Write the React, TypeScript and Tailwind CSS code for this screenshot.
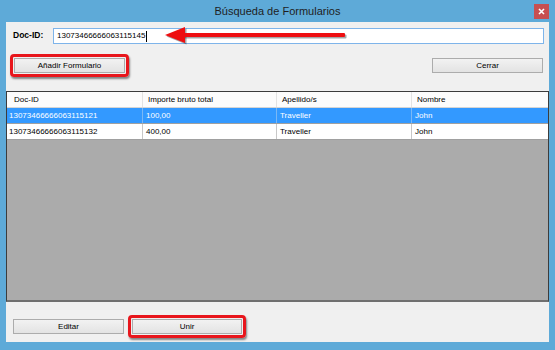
const rows = [
  { id: "13073466666063115121", amount: "100,00", last: "Traveller", name: "John", selected: true },
  { id: "13073466666063115132", amount: "400,00", last: "Traveller", name: "John", selected: false },
];

function WinButton({ label, className = "" }: { label: string; className?: string }) {
  return (
    <div
      className={`h-[15px] border border-[#acacac] bg-gradient-to-b from-[#f2f2f2] to-[#e3e3e3] flex items-center justify-center text-[8px] text-black ${className}`}
    >
      {label}
    </div>
  );
}

function Highlight() {
  return (
    <div className="absolute -inset-x-[4px] -inset-y-[4px] rounded-[4px] border-[3px] border-[#e8161c] shadow-[1px_2px_2px_rgba(0,0,0,0.45)] pointer-events-none" />
  );
}

export default function App() {
  return (
    <div
      className="w-[555px] h-[350px] bg-[#5eaad8] flex flex-col"
      style={{ fontFamily: '"Liberation Sans", Arial, sans-serif' }}
    >
      <div className="relative h-[22px] flex items-center justify-center text-[11px] text-[#1e1e1e]">
        Búsqueda de Formularios
        <div className="absolute right-[6px] top-[4px] w-[15px] h-[15px] bg-[#c74f50] flex items-center justify-center">
          <svg width="7" height="7" viewBox="0 0 7 7">
            <path d="M1 1 L6 6 M6 1 L1 6" stroke="#fff" strokeWidth="1.6" />
          </svg>
        </div>
      </div>

      <div className="mx-[6px] mb-[8px] flex-1 bg-[#f0f0f0] flex flex-col">
        <div className="relative flex items-start pt-[6px] pl-[7px] pr-[5px]">
          <span className="w-[40px] pt-[1px] text-[8.5px] font-bold text-black">Doc-ID:</span>
          <div className="flex-1 h-[16px] border border-[#7eb4ea] bg-white flex items-center pl-[3px] text-[8px] text-black">
            13073466666063115145
            <span className="w-px h-[11px] bg-black ml-px" />
          </div>
          <svg
            className="absolute left-[157px] top-[4px]"
            width="186"
            height="22"
            viewBox="0 0 186 22"
          >
            <g transform="translate(1.5,1.5)" fill="rgba(0,0,0,0.35)">
              <polygon points="2,9 22,1 22,17" />
              <rect x="20" y="7" width="162" height="4" rx="1" />
            </g>
            <g fill="#ee0e10">
              <polygon points="2,9 22,1 22,17" />
              <rect x="20" y="7" width="162" height="4" rx="1" />
            </g>
          </svg>
        </div>

        <div className="flex justify-between pt-[14px] pl-[8px] pr-[6px]">
          <div className="relative">
            <WinButton label="Añadir Formulario" className="w-[111px]" />
            <Highlight />
          </div>
          <WinButton label="Cerrar" className="w-[111px]" />
        </div>

        <div className="mt-[18px] h-[211px] border border-[#3c3c3c] border-b-[2px] border-b-[#6f6f6f] bg-[#ababab] flex flex-col text-[8px]">
          <div className="h-[16px] bg-[#fcfcfc] border-b border-[#d5d5d5] grid grid-cols-[136px_134px_135px_1fr]">
            <div className="pl-[7px] flex items-center border-r border-[#e3e3e3]">Doc-ID</div>
            <div className="pl-[5px] flex items-center border-r border-[#e3e3e3]">Importe bruto total</div>
            <div className="pl-[5px] flex items-center border-r border-[#e3e3e3]">Apellido/s</div>
            <div className="pl-[5px] flex items-center">Nombre</div>
          </div>
          {rows.map((r) => (
            <div
              key={r.id}
              className={`h-[16px] grid grid-cols-[136px_134px_135px_1fr] border-b border-[#a0a0a0] ${
                r.selected ? "bg-[#3399ff] text-white" : "bg-white text-black"
              }`}
            >
              <div className={`pl-[2px] flex items-center border-r ${r.selected ? "border-[#7ab8f5]" : "border-[#c8c8c8]"}`}>{r.id}</div>
              <div className={`pl-[3px] flex items-center border-r ${r.selected ? "border-[#7ab8f5]" : "border-[#c8c8c8]"}`}>{r.amount}</div>
              <div className={`pl-[3px] flex items-center border-r ${r.selected ? "border-[#7ab8f5]" : "border-[#c8c8c8]"}`}>{r.last}</div>
              <div className="pl-[3px] flex items-center">{r.name}</div>
            </div>
          ))}
        </div>

        <div className="flex gap-[8px] pt-[17px] pl-[7px]">
          <WinButton label="Editar" className="w-[111px]" />
          <div className="relative">
            <WinButton label="Unir" className="w-[110px]" />
            <Highlight />
          </div>
        </div>
      </div>
    </div>
  );
}
